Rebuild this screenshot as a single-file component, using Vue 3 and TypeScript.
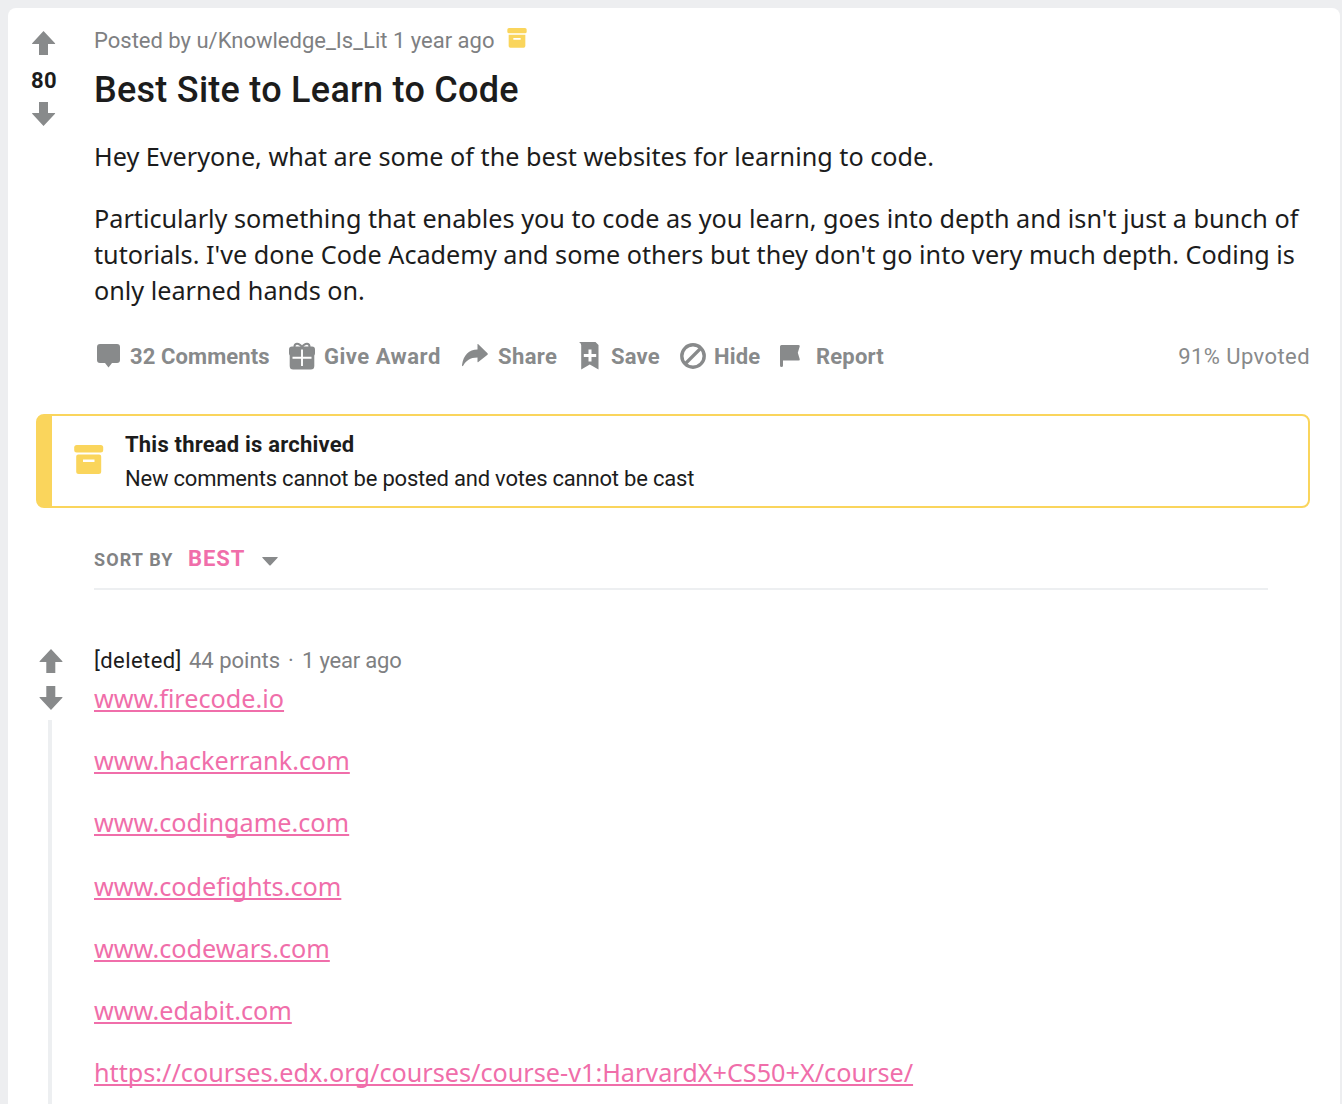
<script setup lang="ts">
const paragraphs: string[][] = [
  ['Hey Everyone, what are some of the best websites for learning to code.'],
  [
    "Particularly something that enables you to code as you learn, goes into depth and isn't just a bunch of",
    "tutorials. I've done Code Academy and some others but they don't go into very much depth. Coding is",
    'only learned hands on.',
  ],
]

const links: string[] = [
  'www.firecode.io',
  'www.hackerrank.com',
  'www.codingame.com',
  'www.codefights.com',
  'www.codewars.com',
  'www.edabit.com',
  'https://courses.edx.org/courses/course-v1:HarvardX+CS50+X/course/',
]
</script>

<template>
  <main class="page">
    <article class="card">
      <section class="post">
        <div class="votes">
          <svg class="arrow" viewBox="0 0 24 24"><path d="M11.500 0 23 12.200Q23.400 13 22.700 13H16V24H7V13H.5Q-.2 13 .2 12.200Z" /></svg>
          <b class="score">80</b>
          <svg class="arrow down" viewBox="0 0 24 24"><path d="M7 0H16V11H22.700Q23.400 11 23 11.800L11.500 24 .2 11.800Q-.2 11 .5 11H7Z" /></svg>
        </div>
        <div class="content">
          <div class="byline">
            <span class="posted">Posted by u/Knowledge_Is_Lit 1 year ago</span>
            <svg class="archive small" viewBox="0 0 30 30"><rect x=".5" y="0" width="29" height="8" rx="2.5" /><path fill-rule="evenodd" d="M2.5 10H27.5V27Q27.5 29.5 25 29.5H5Q2.500 29.500 2.500 27ZM9.500 15V17.500H20.500V15Z" /></svg>
          </div>
          <h1 class="title">Best Site to Learn to Code</h1>
          <p v-for="(lines, i) in paragraphs" :key="i" class="para">
            <span v-for="line in lines" :key="line" class="line">{{ line }}</span>
          </p>
          <div class="actions">
            <svg class="icon comment" viewBox="0 0 24 24"><path d="M3 0H20Q23 0 23 3V16Q23 19 20 19H15L11.500 23.500 8 19H3Q0 19 0 16V3Q0 0 3 0Z" /></svg>
            <span class="act a1">32 Comments</span>
            <svg class="icon gift" viewBox="0 0 26 28"><path d="M5.500 5.500C5 1 9.500 0 13 5C16.500 0 21 1 20.500 5.500" fill="none" stroke="#888a8b" stroke-width="2" /><rect x="0" y="4.500" width="26" height="9.500" rx="3" /><rect x=".7" y="8" width="24.600" height="19.500" rx="3.500" /><path d="M13 7.500V24M3.500 15.800H22.500" stroke="#fff" stroke-width="1.900" /></svg>
            <span class="act a2">Give Award</span>
            <svg class="icon share" viewBox="0 0 26 23"><path d="M15.500.3Q15.500-.5 16.300.2L25.500 9.200Q26.200 10 25.500 10.700L16.300 18Q15.500 18.600 15.500 17.500V13.500C8 13.500 4 17 1.300 21.500Q0 23 0 21C1.500 11 7 5.500 15.500 5.500Z" /></svg>
            <span class="act a3">Share</span>
            <svg class="icon save" viewBox="0 0 20 28"><path d="M0 0H16.500L19.500 3V27.500L10.800 22.500 2.200 27.500V3Q2 1 0 0ZM9.500 7.500V12H4.800V15H9.500V19.500H12.500V15H17.200V12H12.500V7.500Z" fill-rule="evenodd" /></svg>
            <span class="act a4">Save</span>
            <svg class="icon hide" viewBox="0 0 26 26"><circle cx="13" cy="13" r="11.200" fill="none" stroke="#888a8b" stroke-width="3.400" /><path d="M5.500 20.500 20.500 5.500" stroke="#888a8b" stroke-width="3.200" /></svg>
            <span class="act a5">Hide</span>
            <svg class="icon flag" viewBox="0 0 21 22"><path d="M0 1.500Q0 0 1.500 0H18.500Q20.300 0 19.700 1.500L17.800 7.700 19.700 14Q20.300 15.500 18.500 15.500H3V20.500Q3 22 1.500 22T0 20.500Z" /></svg>
            <span class="act a6">Report</span>
            <span class="upvoted">91% Upvoted</span>
          </div>
        </div>
      </section>

      <aside class="notice">
        <svg class="archive" viewBox="0 0 30 30"><rect x=".2" y="0" width="29" height="7.500" rx="2.500" /><path fill-rule="evenodd" d="M4.200 9.500H25.200Q27.200 9.500 27.200 11.500V26.500Q27.200 29 24.700 29H4.700Q2.200 29 2.200 26.500V11.500Q2.200 9.500 4.200 9.500ZM9 14.500V17H20.500V14.500Z" /></svg>
        <div class="notice-text">
          <strong class="notice-title">This thread is archived</strong>
          <span class="notice-body">New comments cannot be posted and votes cannot be cast</span>
        </div>
      </aside>

      <div class="sort">
        <span class="sort-label">SORT BY</span>
        <span class="sort-value">BEST</span>
        <svg class="caret" viewBox="0 0 16 9"><path d="M.5 0H15.500Q16 .3 15.600.8L8.700 8.200Q8 9 7.300 8.200L.4.8Q0 .3.5 0Z" /></svg>
      </div>

      <section class="reply">
        <div class="rail">
          <svg class="arrow" viewBox="0 0 24 24"><path d="M12 0 23.400 12.200Q23.800 13 23.100 13H16.300V24H7.300V13H.9Q.2 13 .6 12.200Z" /></svg>
          <svg class="arrow down" viewBox="0 0 24 24"><path d="M7.300 0H16.300V11H23.100Q23.800 11 23.400 11.800L12 24 .6 11.800Q.2 11 .9 11H7.300Z" /></svg>
          <i class="thread"></i>
        </div>
        <div class="reply-body">
          <div class="reply-meta">
            <span class="author">[deleted]</span>
            <span class="points">44 points</span>
            <span class="dot">·</span>
            <span class="age">1 year ago</span>
          </div>
          <div v-for="link in links" :key="link" class="link-row"><a class="link">{{ link }}</a></div>
        </div>
      </section>
    </article>
  </main>
</template>

<style>
body {
  background: #edeef0;
  overflow: hidden;
}
</style>

<style scoped>
.page {
  box-sizing: border-box;
  height: 1104px;
  padding: 8px 2px 0 8px;
  overflow: hidden;
  font-family: Roboto, "Liberation Sans", sans-serif;
  font-size: 22px;
  color: #1c1c1c;
}
.page * { box-sizing: border-box; }
.page span, .page strong, .page b, .page h1 { white-space: nowrap; }
.page svg { display: block; flex: none; fill: #888a8b; }
.card {
  height: 1110px;
  background: #fff;
  border-radius: 8px;
}
.post { display: flex; height: 406px; }
.votes {
  width: 86px;
  padding: 23px 0 0 24px;
  flex: none;
  display: flex;
  flex-direction: column;
  align-items: flex-start;
}
.arrow { width: 24px; height: 24px; }
.score {
  margin: 14px 0 10px -1px;
  width: 26px;
  height: 23px;
  line-height: 23px;
  font-size: 22px;
  letter-spacing: 0.5px;
  text-align: center;
}
.content { flex: 1; padding-right: 30px; }
.byline { display: flex; height: 42px; padding-top: 20px; color: #7e8082; line-height: 26px; }
.page .archive { fill: #fad55c; width: 30px; height: 30px; }
.page .archive.small { width: 20px; height: 20px; margin-left: 13px; }
.title {
  margin: 18px 0 0;
  height: 44px;
  line-height: 44px;
  font-size: 36px;
  font-weight: 500;
  letter-spacing: 0.27px;
}
.para {
  margin: 26px 0 0;
  font-family: "Noto Sans", sans-serif;
  font-size: 25.21px;
  line-height: 36px;
}
.para + .para { margin-top: 26px; }
.line { display: block; }
.actions {
  display: flex;
  align-items: center;
  margin-top: 35px;
  height: 28px;
  color: #888a8b;
  font-weight: 700;
}
.act { flex: none; line-height: 28px; letter-spacing: 0.2px; }
.icon { margin-top: -3px; }
.comment { width: 24px; height: 24px; margin: -2px 9px 0 3px; }
.a1 { width: 159px; letter-spacing: 0.1px; }
.gift { width: 26px; height: 28px; margin-right: 9px; }
.a2 { width: 138px; letter-spacing: 0.5px; }
.share { width: 26px; height: 23px; margin-right: 10px; }
.a3 { width: 81px; letter-spacing: 0.4px; }
.save { width: 20px; height: 28px; margin-right: 12px; }
.a4 { width: 69px; }
.hide { width: 26px; height: 26px; margin-right: 8px; }
.a5 { width: 66px; }
.flag { width: 21px; height: 22px; margin-right: 15px; }
.upvoted { margin-left: auto; font-weight: 400; line-height: 28px; letter-spacing: 0.42px; }
.notice {
  display: flex;
  margin: 0 30px 0 28px;
  height: 94px;
  border: 2px solid #fad55c;
  border-left-width: 16px;
  border-radius: 8px;
  padding: 15px 0 0 22px;
}
.notice .archive { margin: 14px 21px 0 0; }
.notice-text { display: flex; flex-direction: column; line-height: 28px; gap: 6px; }
.notice-title { letter-spacing: 0.2px; }
.notice-body { letter-spacing: -0.21px; }
.sort {
  display: flex;
  align-items: center;
  margin: 36px 72px 0 86px;
  height: 46px;
  border-bottom: 2px solid #edeff1;
  padding-bottom: 14px;
  font-weight: 700;
  color: #888a8b;
}
.sort-label { font-size: 18px; width: 94px; letter-spacing: 1.1px; color: #828384; }
.sort-value { color: #f06eaa; width: 74px; letter-spacing: 0.9px; margin-top: -1px; }
.caret { width: 16px; height: 9px; margin-top: 5px; }
.reply { display: flex; height: 520px; padding-top: 57px; }
.rail { width: 86px; flex: none; display: flex; flex-direction: column; padding-left: 31px; }
.rail .arrow { margin: 2px 0 11px; }
.thread { display: block; width: 4px; height: 400px; margin: -1px 0 0 9px; background: #edeff1; }
.reply-meta { display: flex; height: 33px; line-height: 28px; color: #7e8082; }
.author { color: #1c1c1c; width: 95px; letter-spacing: 0.42px; }
.points { width: 99px; }
.dot { width: 14px; }
.age { letter-spacing: -0.2px; }
.link-row {
  height: 36px;
  margin-bottom: 26px;
  font-family: "Noto Sans", sans-serif;
  font-size: 25.21px;
  line-height: 36px;
}
.link-row:nth-child(4) { margin-bottom: 28px; }
.link {
  color: #f06eaa;
  text-decoration: underline;
  text-decoration-skip-ink: none;
  text-decoration-thickness: 2px;
  text-underline-offset: 2px;
}
</style>
